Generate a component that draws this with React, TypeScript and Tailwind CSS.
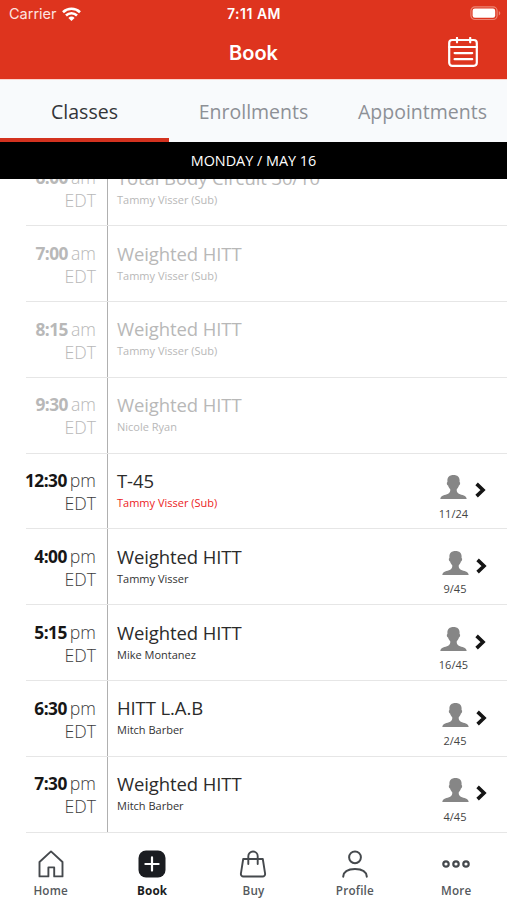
import React from 'react';

interface ClassItem {
  time: string;
  period: string;
  name: string;
  instructor: string;
  isSub?: boolean;
  isPast?: boolean;
  spots?: string;
}

const classes: ClassItem[] = [
  { time: '6:00', period: 'am', name: 'Total Body Circuit 30/10', instructor: 'Tammy Visser (Sub)', isPast: true },
  { time: '7:00', period: 'am', name: 'Weighted HITT', instructor: 'Tammy Visser (Sub)', isPast: true },
  { time: '8:15', period: 'am', name: 'Weighted HITT', instructor: 'Tammy Visser (Sub)', isPast: true },
  { time: '9:30', period: 'am', name: 'Weighted HITT', instructor: 'Nicole Ryan', isPast: true },
  { time: '12:30', period: 'pm', name: 'T-45', instructor: 'Tammy Visser (Sub)', isSub: true, spots: '11/24' },
  { time: '4:00', period: 'pm', name: 'Weighted HITT', instructor: 'Tammy Visser', spots: '9/45' },
  { time: '5:15', period: 'pm', name: 'Weighted HITT', instructor: 'Mike Montanez', spots: '16/45' },
  { time: '6:30', period: 'pm', name: 'HITT L.A.B', instructor: 'Mitch Barber', spots: '2/45' },
  { time: '7:30', period: 'pm', name: 'Weighted HITT', instructor: 'Mitch Barber', spots: '4/45' },
];

const tabs = ['Classes', 'Enrollments', 'Appointments'];

const WifiIcon = () => (
  <svg className="w-[19px] h-[14px]" viewBox="0 0 19 14" fill="none" stroke="white" strokeWidth="2.6">
    <path d="M1 5.2a12.3 12.3 0 0 1 17 0" />
    <path d="M4 8.5a8 8 0 0 1 11 0" />
    <path d="M6.4 10.9a4.4 4.4 0 0 1 6.2 0L9.5 13.9z" fill="white" stroke="none" />
  </svg>
);

const BatteryIcon = () => (
  <svg className="w-[31px] h-[15px]" viewBox="0 0 31 15" fill="none">
    <rect x="0.9" y="0.9" width="26.2" height="12.6" rx="4" stroke="#ec8474" strokeWidth="1.2" />
    <rect x="2.6" y="2.6" width="22.6" height="9.2" rx="2.2" fill="white" />
    <path d="M28.8 5.1c2 .9 2 3.5 0 4.4z" fill="#ec8474" />
  </svg>
);

const CalendarIcon = () => (
  <svg className="w-[30px] h-[30px]" viewBox="0 0 30 30" fill="none" stroke="white" strokeWidth="2.2" strokeLinecap="round">
    <rect x="1.2" y="3" width="27.6" height="25.8" rx="3" />
    <path d="M1.2 10h27.6M9 .9v4.4M22.2 .9v4.4M6.6 16.1h17.6M6.6 22.2h17.6" />
  </svg>
);

const PersonIcon = () => (
  <svg className="w-[27px] h-[24px]" viewBox="0 0 27 24" fill="#868686">
    <path d="M13.5 0C9.5 0 7.4 2.2 7.4 5.4c0 .7 0 1.1.1 1.6-1 0-.9 3 .6 3.500.4 1.700 1.200 2.700 2.100 3.600.3 2-.2 3.700-2 4.600C5 20.200.7 20 .3 24h26.400c-.4-4-4.700-3.800-7.900-5.300-1.800-.9-2.300-2.600-2-4.600.9-.9 1.700-1.900 2.100-3.600 1.500-.5 1.600-3.500.6-3.500.1-.5.1-.9.1-1.600C19.600 2.200 17.500 0 13.500 0z" />
  </svg>
);

const ChevronIcon = () => (
  <svg className="w-[11px] h-[16px]" viewBox="0 0 11 16" fill="none" stroke="#151515" strokeWidth="3.6">
    <path d="M1.6 1.9L8 8L1.6 14.1" />
  </svg>
);

const HomeIcon = () => (
  <svg className="w-[28px] h-[28px]" viewBox="0 0 28 28" fill="none" stroke="#45494d" strokeWidth="1.9" strokeLinejoin="round">
    <path d="M2.5 12L14 1.4L25.5 12V26.4H17.2V17.4H11.4V26.4H2.5z" />
  </svg>
);

const BookIcon = () => (
  <svg className="w-[28px] h-[28px]" viewBox="0 0 28 28" fill="none">
    <rect x="0.5" y="0.5" width="27" height="27" rx="7.5" fill="#1b1d21" />
    <path d="M14 7.4v13.2M7.4 14h13.2" stroke="white" strokeWidth="2.2" strokeLinecap="round" />
  </svg>
);

const BuyIcon = () => (
  <svg className="w-[28px] h-[28px]" viewBox="0 0 28 28" fill="none" stroke="#45494d" strokeWidth="1.9" strokeLinecap="round" strokeLinejoin="round">
    <path d="M4.2 9h19.6l2.3 14.6a2.5 2.5 0 0 1-2.5 2.9H4.4a2.5 2.5 0 0 1-2.5-2.9z" />
    <path d="M9.3 14V6.2a4.7 4.7 0 0 1 9.4 0V14" />
  </svg>
);

const ProfileIcon = () => (
  <svg className="w-[28px] h-[28px]" viewBox="0 0 28 28" fill="none" stroke="#45494d" strokeWidth="2" strokeLinecap="round">
    <circle cx="14" cy="7.3" r="5.9" />
    <path d="M2.2 26.7c.4-4.9 4.6-7.6 11.8-7.6s11.4 2.700 11.800 7.600" />
  </svg>
);

const MoreIcon = () => (
  <svg className="w-[28px] h-[28px]" viewBox="0 0 28 28" fill="none" stroke="#45494d" strokeWidth="2.2">
    <circle cx="4" cy="14" r="2.7" />
    <circle cx="14" cy="14" r="2.7" />
    <circle cx="24" cy="14" r="2.7" />
  </svg>
);

const navItems = [
  { label: 'Home', icon: HomeIcon },
  { label: 'Book', icon: BookIcon },
  { label: 'Buy', icon: BuyIcon },
  { label: 'Profile', icon: ProfileIcon },
  { label: 'More', icon: MoreIcon },
];

const ClassRow: React.FC<{ item: ClassItem }> = ({ item }) => {
  const { time, period, name, instructor, isSub, isPast, spots } = item;

  return (
    <div className="flex h-[75.8px] shrink-0">
      <div className="w-[26px] shrink-0" />
      <div className="flex flex-1 border-b border-[#e6e6e6]">
        <div
          className={`w-[81.5px] shrink-0 border-r border-[#b0b0b0] pt-[15.6px] pr-[10.5px] flex flex-col items-end text-[17.7px] leading-[23px] whitespace-nowrap ${
            isPast ? 'text-[#b8b8b8]' : 'text-[#3c3c3c]'
          }`}
        >
          <div className="flex gap-[3px]">
            <span className={`font-bold text-[17.3px] tracking-[-0.5px] ${isPast ? '' : 'text-[#161616]'}`}>{time}</span>
            <span className="font-light">{period}</span>
          </div>
          <span className="font-light">EDT</span>
        </div>
        <div className="flex-1 pt-[15.4px] pl-[9.5px]">
          <p className={`text-[18.5px] leading-[24px] tracking-[-0.1px] ${isPast ? 'text-[#b8b8b8]' : 'text-[#2b2b2b]'}`}>{name}</p>
          <p
            className={`text-[11px] leading-[20px] ${
              isPast ? 'text-[#b8b8b8]' : isSub ? 'text-[#ec1c24]' : 'text-[#333333]'
            }`}
          >
            {instructor}
          </p>
        </div>
        {spots && (
          <div className={`flex items-start pt-[21.6px] ${spots.length > 4 ? 'gap-[6.5px] pr-[21.5px]' : 'gap-[7px] pr-[20.5px]'}`}>
            <div className="flex flex-col items-center">
              <PersonIcon />
              <span className="mt-[6.5px] text-[11px] leading-[16px] text-[#444444]">{spots}</span>
            </div>
            <div className="pt-[7px]">
              <ChevronIcon />
            </div>
          </div>
        )}
      </div>
    </div>
  );
};

const App: React.FC = () => {
  return (
    <div className="w-[507px] h-[900px] flex flex-col overflow-hidden bg-white font-['Open_Sans',sans-serif]">
      <header className="h-[79px] shrink-0 bg-[#de341e] text-white font-['Inter',sans-serif]">
        <div className="grid grid-cols-3 items-center h-[27px] pl-[9px] pr-[6px] text-[14.5px]">
          <div className="flex items-center gap-[5px] text-[#fde4e0]">
            <span>Carrier</span>
            <WifiIcon />
          </div>
          <span className="text-center font-semibold text-[14px] tracking-[0.5px] pr-[2px]">7:11 AM</span>
          <div className="flex justify-end">
            <BatteryIcon />
          </div>
        </div>
        <div className="grid grid-cols-3 items-center h-[50px] pr-[29px] pl-[29px]">
          <span />
          <h1 className="pt-px text-center text-[20px] font-semibold">Book</h1>
          <div className="flex justify-end">
            <CalendarIcon />
          </div>
        </div>
      </header>

      <div className="grid grid-cols-3 h-[63px] shrink-0 border-t border-[#fbd5cf] bg-[#f8fafc]">
        {tabs.map((tab, index) => (
          <div
            key={tab}
            className={`text-center text-[19.5px] leading-[26px] pt-[19px] ${
              index === 0 ? 'text-[#333538] border-b-4 border-[#d3321f]' : 'text-[#8d9096]'
            }`}
          >
            {tab}
          </div>
        ))}
      </div>

      <div className="h-[37px] shrink-0 bg-black text-white text-center text-[14.4px] leading-[37px]">MONDAY / MAY 16</div>

      <main className="flex-1 min-h-0 flex flex-col justify-end overflow-hidden">
        {classes.map((item) => (
          <ClassRow key={item.time} item={item} />
        ))}
      </main>

      <nav className="grid grid-cols-5 h-[67.5px] shrink-0 pt-[17px]">
        {navItems.map(({ label, icon: Icon }) => (
          <div key={label} className="flex flex-col items-center">
            <Icon />
            <span
              className={`mt-[4.5px] text-[11.7px] leading-[16px] tracking-[0.2px] ${
                label === 'Book' ? 'font-bold text-[#1b1d21]' : 'font-semibold text-[#55595d]'
              }`}
            >
              {label}
            </span>
          </div>
        ))}
      </nav>
    </div>
  );
};

export default App;
